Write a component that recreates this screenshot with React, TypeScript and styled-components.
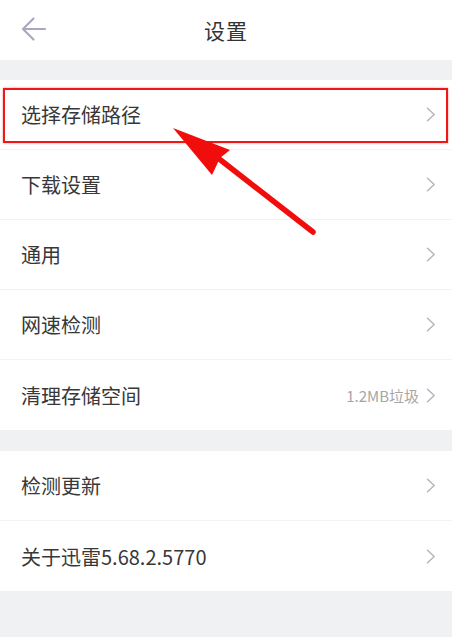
import styled, { createGlobalStyle } from "styled-components";

const GlobalStyle = createGlobalStyle`
  html, body {
    margin: 0;
    padding: 0;
    background: #f0f1f3;
  }
  body {
    font-family: "Noto Sans CJK SC", "Noto Sans", sans-serif;
  }
`

type Item = {
    label: string
    extra?: string
    marked?: boolean
}

const groups: Item[][] = [
    [
        {label: "选择存储路径", marked: true},
        {label: "下载设置"},
        {label: "通用"},
        {label: "网速检测"},
        {label: "清理存储空间", extra: "1.2MB垃圾"},
    ],
    [
        {label: "检测更新"},
        {label: "关于迅雷5.68.2.5770"},
    ],
]

const BackIcon = () => (
    <svg width="26" height="26" viewBox="0 0 26 26" fill="none">
        <path d="M24 13H2.5M12.5 2.5L2 13l10.5 10.5" stroke="#a9a8bf" strokeWidth="2.2"
              strokeLinecap="round" strokeLinejoin="round"/>
    </svg>
)

const Chevron = () => (
    <svg width="10" height="15" viewBox="0 0 10 15" fill="none">
        <path d="M1.5 1.2L8.2 7.5 1.5 13.8" stroke="#b4b4b8" strokeWidth="1.4"
              strokeLinecap="round" strokeLinejoin="round"/>
    </svg>
)

const RedArrow = () => (
    <ArrowLayer width="452" height="637" viewBox="0 0 452 637">
        <defs>
            <filter id="soft" x="-10%" y="-10%" width="120%" height="120%">
                <feGaussianBlur stdDeviation="0.6"/>
            </filter>
        </defs>
        <g filter="url(#soft)">
            <line x1="218" y1="158" x2="313" y2="232" stroke="#f20d0d" strokeWidth="5.5" strokeLinecap="round"/>
            <polygon points="173,128 230,150 220,158 212,175" fill="#f20d0d"/>
        </g>
    </ArrowLayer>
)

export default function App() {
    return (
        <Page>
            <GlobalStyle/>
            <Header>
                <BackButton><BackIcon/></BackButton>
                <Title>设置</Title>
            </Header>
            {groups.map((group, gi) => (
                <Group key={gi}>
                    {group.map((item, i) => (
                        <Row key={item.label} $last={i === group.length - 1}>
                            <Label>{item.label}</Label>
                            <Right>
                                {item.extra && <Extra>{item.extra}</Extra>}
                                <Chevron/>
                            </Right>
                            {item.marked && <Highlight/>}
                        </Row>
                    ))}
                </Group>
            ))}
            <RedArrow/>
        </Page>
    )
}

const Page = styled.div`
  position: relative;
  width: 452px;
  min-height: 637px;
  background: #f0f1f3;
  overflow: hidden;
`

const Header = styled.div`
  height: 60px;
  background: #ffffff;
  display: flex;
  align-items: center;
  justify-content: center;
  position: relative;
  margin-bottom: 20px;
`

const BackButton = styled.div`
  position: absolute;
  left: 21px;
  top: 16px;
  display: flex;
`

const Title = styled.div`
  font-size: 21px;
  color: #333333;
  letter-spacing: 1px;
`

const Group = styled.div`
  background: #ffffff;
  margin-bottom: 21px;
`

const Row = styled.div<{ $last: boolean }>`
  position: relative;
  height: 70px;
  box-sizing: border-box;
  padding: 0 16px 0 21px;
  display: flex;
  align-items: center;
  justify-content: space-between;
  border-bottom: ${p => p.$last ? "none" : "1px solid #f3f3f4"};
`

const Label = styled.div`
  font-size: 20px;
  color: #383838;
`

const Right = styled.div`
  display: flex;
  align-items: center;
  gap: 7px;
`

const Extra = styled.span`
  font-size: 15px;
  color: #a6a6a8;
`

const Highlight = styled.div`
  position: absolute;
  left: 3px;
  right: 4px;
  top: 8px;
  bottom: 6px;
  border: 2.5px solid #f01616;
  box-shadow: 0 0 2px rgba(240, 22, 22, 0.5);
  pointer-events: none;
`

const ArrowLayer = styled.svg`
  position: absolute;
  left: 0;
  top: 0;
  pointer-events: none;
`
